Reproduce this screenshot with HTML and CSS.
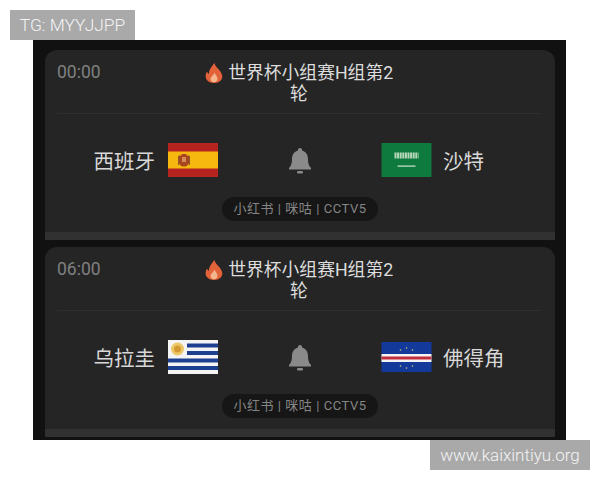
FILE: index.html
```html
<!DOCTYPE html>
<html lang="zh">

<head>
    <meta charset="UTF-8">
    <title>世界杯赛程</title>
    <link rel="stylesheet" href="styles.css">
</head>

<body>
    <div class="mark mark--top">TG: MYYJJPP</div>

    <div class="screen">
        <!-- 西班牙 vs 沙特 -->
        <div class="card">
            <div class="card__head">
                <div class="card__time">00:00</div>
                <div class="card__title">
                    <svg class="flame" viewBox="0 0 18 20"><path fill="#e2623a" d="M9.500 0C10 3.500 13 5 15 8c2.500 3.500 3 6 1.500 8.500C15 19 12 20 9 20s-6-1-7.500-3.500C0 14 .5 11 2 8.500c.5 1 1 2 2 2.500C3.800 7 6.500 3.500 9.500 0z"/><path fill="#f3b68d" d="M9.500 9.500c.5 2 3 3.500 3 6.500 0 2-1.500 3.200-3.500 3.200S5.500 18 5.500 16c0-2.500 3-3.500 4-6.500z"/></svg>
                    世界杯小组赛H组第2轮
                </div>
            </div>
            <div class="card__match">
                <div class="team team--left">
                    <span>西班牙</span>
                    <svg class="flag" viewBox="0 0 50 34">
                        <rect width="50" height="34" fill="#b5241f"/>
                        <rect y="8.500" width="50" height="17" fill="#f6b80f"/>
                        <path fill="#a8471f" d="M11 12.500h2.500v-1.500h5v1.500H21v7c0 2.500-2.500 4-5 4s-5-1.500-5-4z"/>
                        <rect x="14" y="14" width="4" height="5" fill="#d98a5a"/>
                        <rect x="10" y="13" width="1" height="9" fill="#8f5a2a"/>
                        <rect x="21" y="13" width="1" height="9" fill="#8f5a2a"/>
                    </svg>
                </div>
                <svg class="bell" viewBox="0 0 24 26"><path fill="#8a8a8a" d="M12 0c1.200 0 2 .8 2 2v.6c3.800 1 6 4.200 6 8.400 0 4 .6 6.600 3 9v1.500H1V20c2.400-2.400 3-5 3-9 0-4.200 2.200-7.400 6-8.400V2c0-1.200.8-2 2-2z"/><rect x="9" y="23" width="6" height="2.500" rx="1.200" fill="#8a8a8a"/></svg>
                <div class="team">
                    <svg class="flag flag--wide" viewBox="0 0 50 34">
                        <rect width="50" height="34" fill="#0f7a3d"/>
                        <path stroke="#b6d8bb" stroke-width="6" stroke-dasharray="2 .6" d="M13 12.500h24"/>
                        <rect x="16" y="22.500" width="18" height="1.200" fill="#cfe5d2"/>
                    </svg>
                    <span>沙特</span>
                </div>
            </div>
            <div class="card__foot"><span class="pill">小红书 | 咪咕 | CCTV5</span></div>
            <div class="card__band"></div>
        </div>

        <!-- 乌拉圭 vs 佛得角 -->
        <div class="card">
            <div class="card__head">
                <div class="card__time">06:00</div>
                <div class="card__title">
                    <svg class="flame" viewBox="0 0 18 20"><path fill="#e2623a" d="M9.500 0C10 3.500 13 5 15 8c2.500 3.500 3 6 1.500 8.500C15 19 12 20 9 20s-6-1-7.500-3.500C0 14 .5 11 2 8.500c.5 1 1 2 2 2.500C3.800 7 6.500 3.500 9.500 0z"/><path fill="#f3b68d" d="M9.500 9.500c.5 2 3 3.500 3 6.500 0 2-1.500 3.200-3.500 3.200S5.500 18 5.500 16c0-2.500 3-3.500 4-6.500z"/></svg>
                    世界杯小组赛H组第2轮
                </div>
            </div>
            <div class="card__match">
                <div class="team team--left">
                    <span>乌拉圭</span>
                    <svg class="flag" viewBox="0 0 50 34">
                        <rect width="50" height="34" fill="#f4f4f4"/>
                        <rect x="19" y="3.500" width="31" height="4" fill="#1e3f8f"/>
                        <rect x="19" y="11" width="31" height="4" fill="#1e3f8f"/>
                        <rect y="18.500" width="50" height="4" fill="#1e3f8f"/>
                        <rect y="26" width="50" height="4" fill="#1e3f8f"/>
                        <circle cx="9.500" cy="9" r="6.500" fill="#edc868"/>
                        <circle cx="9.500" cy="9" r="3.500" fill="#d39a34"/>
                    </svg>
                </div>
                <svg class="bell" viewBox="0 0 24 26"><path fill="#8a8a8a" d="M12 0c1.200 0 2 .8 2 2v.6c3.800 1 6 4.200 6 8.400 0 4 .6 6.600 3 9v1.500H1V20c2.400-2.400 3-5 3-9 0-4.200 2.200-7.400 6-8.400V2c0-1.200.8-2 2-2z"/><rect x="9" y="23" width="6" height="2.500" rx="1.200" fill="#8a8a8a"/></svg>
                <div class="team">
                    <svg class="flag flag--wide" viewBox="0 0 50 34">
                        <rect width="50" height="30" y="2" fill="#13399a"/>
                        <rect y="14" width="50" height="8" fill="#f4f4f4"/>
                        <rect y="16.500" width="50" height="3" fill="#c22f3a"/>
                        <g fill="#d8c46a">
                            <circle cx="19" cy="10" r=".8"/><circle cx="25" cy="8" r=".8"/><circle cx="31" cy="10" r=".8"/>
                            <circle cx="19" cy="26" r=".8"/><circle cx="25" cy="28" r=".8"/><circle cx="31" cy="26" r=".8"/>
                        </g>
                    </svg>
                    <span>佛得角</span>
                </div>
            </div>
            <div class="card__foot"><span class="pill">小红书 | 咪咕 | CCTV5</span></div>
            <div class="card__band"></div>
        </div>
    </div>

    <div class="mark mark--bottom">www.kaixintiyu.org</div>
</body>

</html>
```

FILE: styles.css
```css
/* 基础 */
body {
    margin: 0;
    background: #fff;
    font-family: Roboto, "Noto Sans CJK SC", sans-serif;
    overflow: hidden;
}

/* 水印 */
.mark {
    position: absolute;
    height: 30px;
    line-height: 30px;
    background: #a9a9a9;
    color: #f4f4f4;
    font-weight: 300;
    text-align: center;
}

.mark--top {
    top: 10px;
    left: 10px;
    width: 125px;
    font-size: 17.400px;
}

.mark--bottom {
    top: 440px;
    left: 430px;
    width: 160px;
    font-size: 17px;
}

/* 手机屏幕 */
.screen {
    width: 510px;
    height: 390px;
    margin: 40px 0 0 33px;
    padding: 10px 11px 0 12px;
    background: #111;
    overflow: hidden;
    display: flex;
    flex-direction: column;
    gap: 7px;
}

/* 比赛卡片 */
.card {
    flex: none;
    height: 190px;
    background: #252525;
    border-radius: 12px 12px 0 0;
    display: flex;
    flex-direction: column;
}

.card__head {
    display: grid;
    grid-template-columns: 1fr 200px 1fr;
    height: 64px;
    margin: 0 14px 0 12px;
    border-bottom: 1px solid #2f2f2f;
    box-sizing: border-box;
}

.card__time {
    padding-top: 12px;
    font-size: 17.500px;
    line-height: 20px;
    color: #808080;
}

.card__title {
    padding-top: 12px;
    font-size: 17.800px;
    line-height: 21px;
    color: #ddd;
    text-align: center;
}

.flame {
    width: 18px;
    height: 20px;
    margin-right: 1px;
    vertical-align: -4px;
}

.card__match {
    display: grid;
    grid-template-columns: 1fr 162px 1fr;
    align-items: center;
    justify-items: center;
    height: 70px;
    margin-top: 11px;
}

.team {
    justify-self: start;
    display: flex;
    align-items: center;
    gap: 11px;
    font-size: 20.500px;
    color: #d8d8d8;
}

.team--left {
    justify-self: end;
    gap: 13px;
    margin-right: 1px;
}

.flag {
    width: 50px;
    height: 34px;
    display: block;
}

.flag--wide {
    width: 51px;
}

.bell {
    width: 24px;
    height: 26px;
    margin-top: 2px;
}

.card__foot {
    display: flex;
    justify-content: center;
    margin-top: 2px;
}

.pill {
    height: 24px;
    line-height: 24px;
    padding: 0 11px;
    border-radius: 12px;
    background: #161616;
    color: #858585;
    font-size: 13px;
    letter-spacing: .55px;
}

.card__band {
    height: 8px;
    margin-top: auto;
    background: #313131;
}
```
